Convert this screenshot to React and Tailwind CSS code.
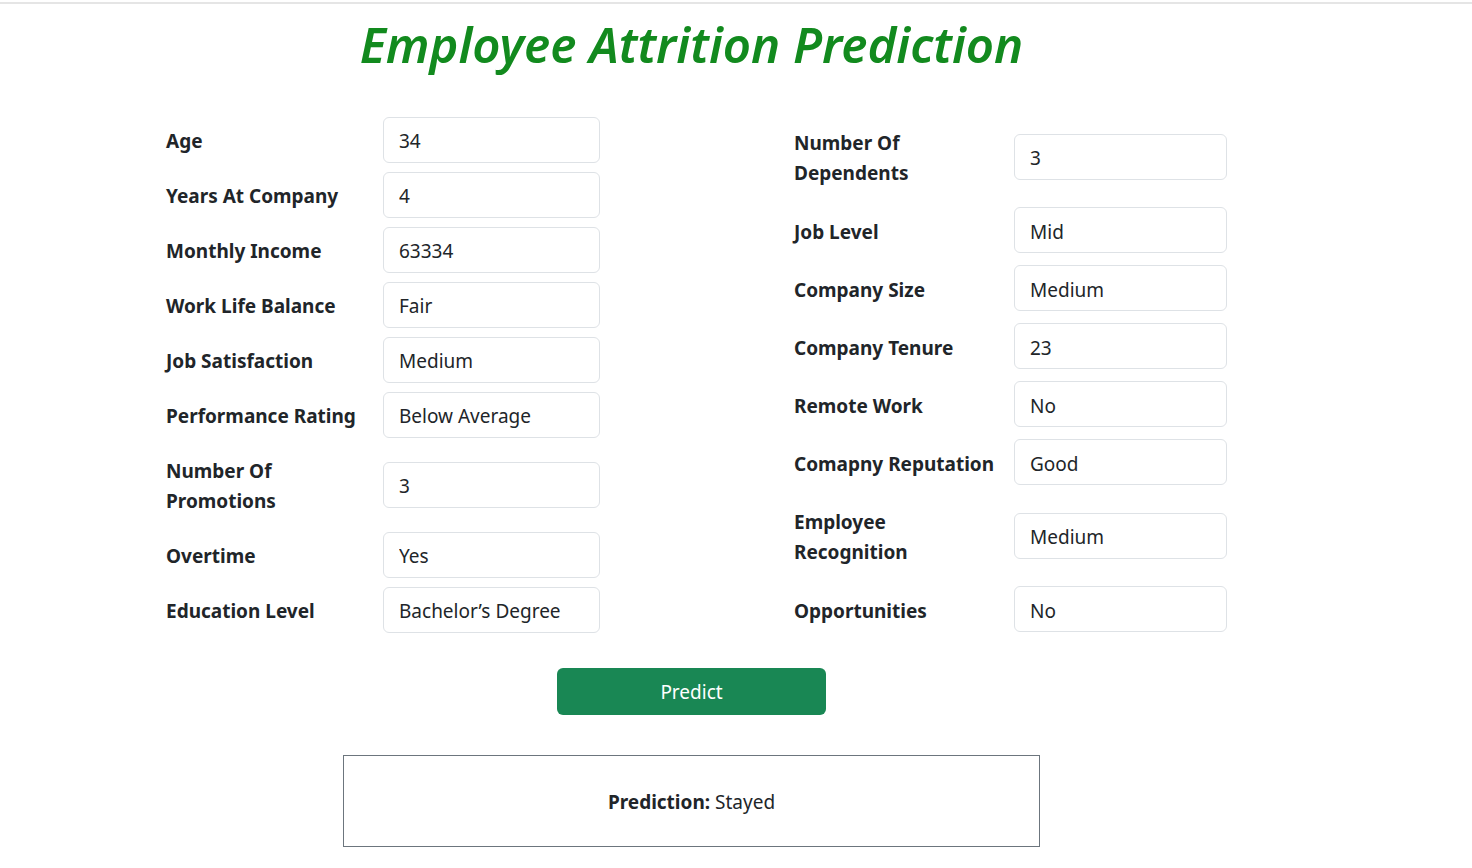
import React from 'react';

const leftFields = [
  { label: 'Age', value: '34' },
  { label: 'Years At Company', value: '4' },
  { label: 'Monthly Income', value: '63334' },
  { label: 'Work Life Balance', value: 'Fair' },
  { label: 'Job Satisfaction', value: 'Medium' },
  { label: 'Performance Rating', value: 'Below Average' },
  { label: 'Number Of Promotions', value: '3', tall: true },
  { label: 'Overtime', value: 'Yes' },
  { label: 'Education Level', value: 'Bachelor\u2019s Degree' },
];

const rightFields = [
  { label: 'Number Of Dependents', value: '3', tall: true },
  { label: 'Job Level', value: 'Mid' },
  { label: 'Company Size', value: 'Medium' },
  { label: 'Company Tenure', value: '23' },
  { label: 'Remote Work', value: 'No' },
  { label: 'Comapny Reputation', value: 'Good' },
  { label: 'Employee Recognition', value: 'Medium', tall: true },
  { label: 'Opportunities', value: 'No' },
];

function Field({ label, value, side, tall }) {
  const isLeft = side === 'left';
  return (
    <div
      className={`flex items-center ${
        isLeft ? (tall ? 'h-[85px]' : 'h-[55px]') : tall ? 'h-[89px]' : 'h-[58px]'
      }`}
    >
      <div className={`${isLeft ? 'w-[217px]' : 'w-[220px]'} shrink-0 pt-[3px]`}>
        <label
          className={`block ${tall ? 'w-[130px]' : ''} font-bold text-[19px] leading-[30px] text-[#212529]`}
        >
          {label}
        </label>
      </div>
      <input
        readOnly
        value={value}
        className={`${isLeft ? 'w-[217px]' : 'w-[213px]'} h-[46px] shrink-0 border border-[#dee2e6] rounded-md bg-white px-[15px] pt-[3px] text-[19px] text-[#212529] outline-none`}
      />
    </div>
  );
}

export default function App() {
  return (
    <div className="min-h-screen bg-white font-['Segoe_UI','Noto_Sans',sans-serif] text-[#212529]">
      <div className="h-[2px] mt-[2px] bg-[#e5e5e5]" />
      <div className="w-[1383px] text-center">
        <h1 className="pt-[10px] text-[49px] leading-[60px] font-semibold italic text-[#128a1e]">
          Employee Attrition Prediction
        </h1>
      </div>

      <div className="mt-[38px] ml-[166px] flex gap-[194px]">
        <div className="flex flex-col w-[434px]">
          {leftFields.map((f) => (
            <Field key={f.label} {...f} side="left" />
          ))}
        </div>
        <div className="flex flex-col w-[433px]">
          {rightFields.map((f) => (
            <Field key={f.label} {...f} side="right" />
          ))}
        </div>
      </div>

      <div className="w-[1383px] flex flex-col items-center">
        <button className="mt-[30px] w-[269px] h-[47px] rounded-md bg-[#198754] pt-[2px] text-white text-[19px]">
          Predict
        </button>
        <div className="mt-[40px] w-[697px] h-[92px] border border-[#6c757d] flex items-center justify-center pt-[2px] text-[19px]">
          <span>
            <strong className="font-bold">Prediction:</strong> Stayed
          </span>
        </div>
      </div>
    </div>
  );
}
